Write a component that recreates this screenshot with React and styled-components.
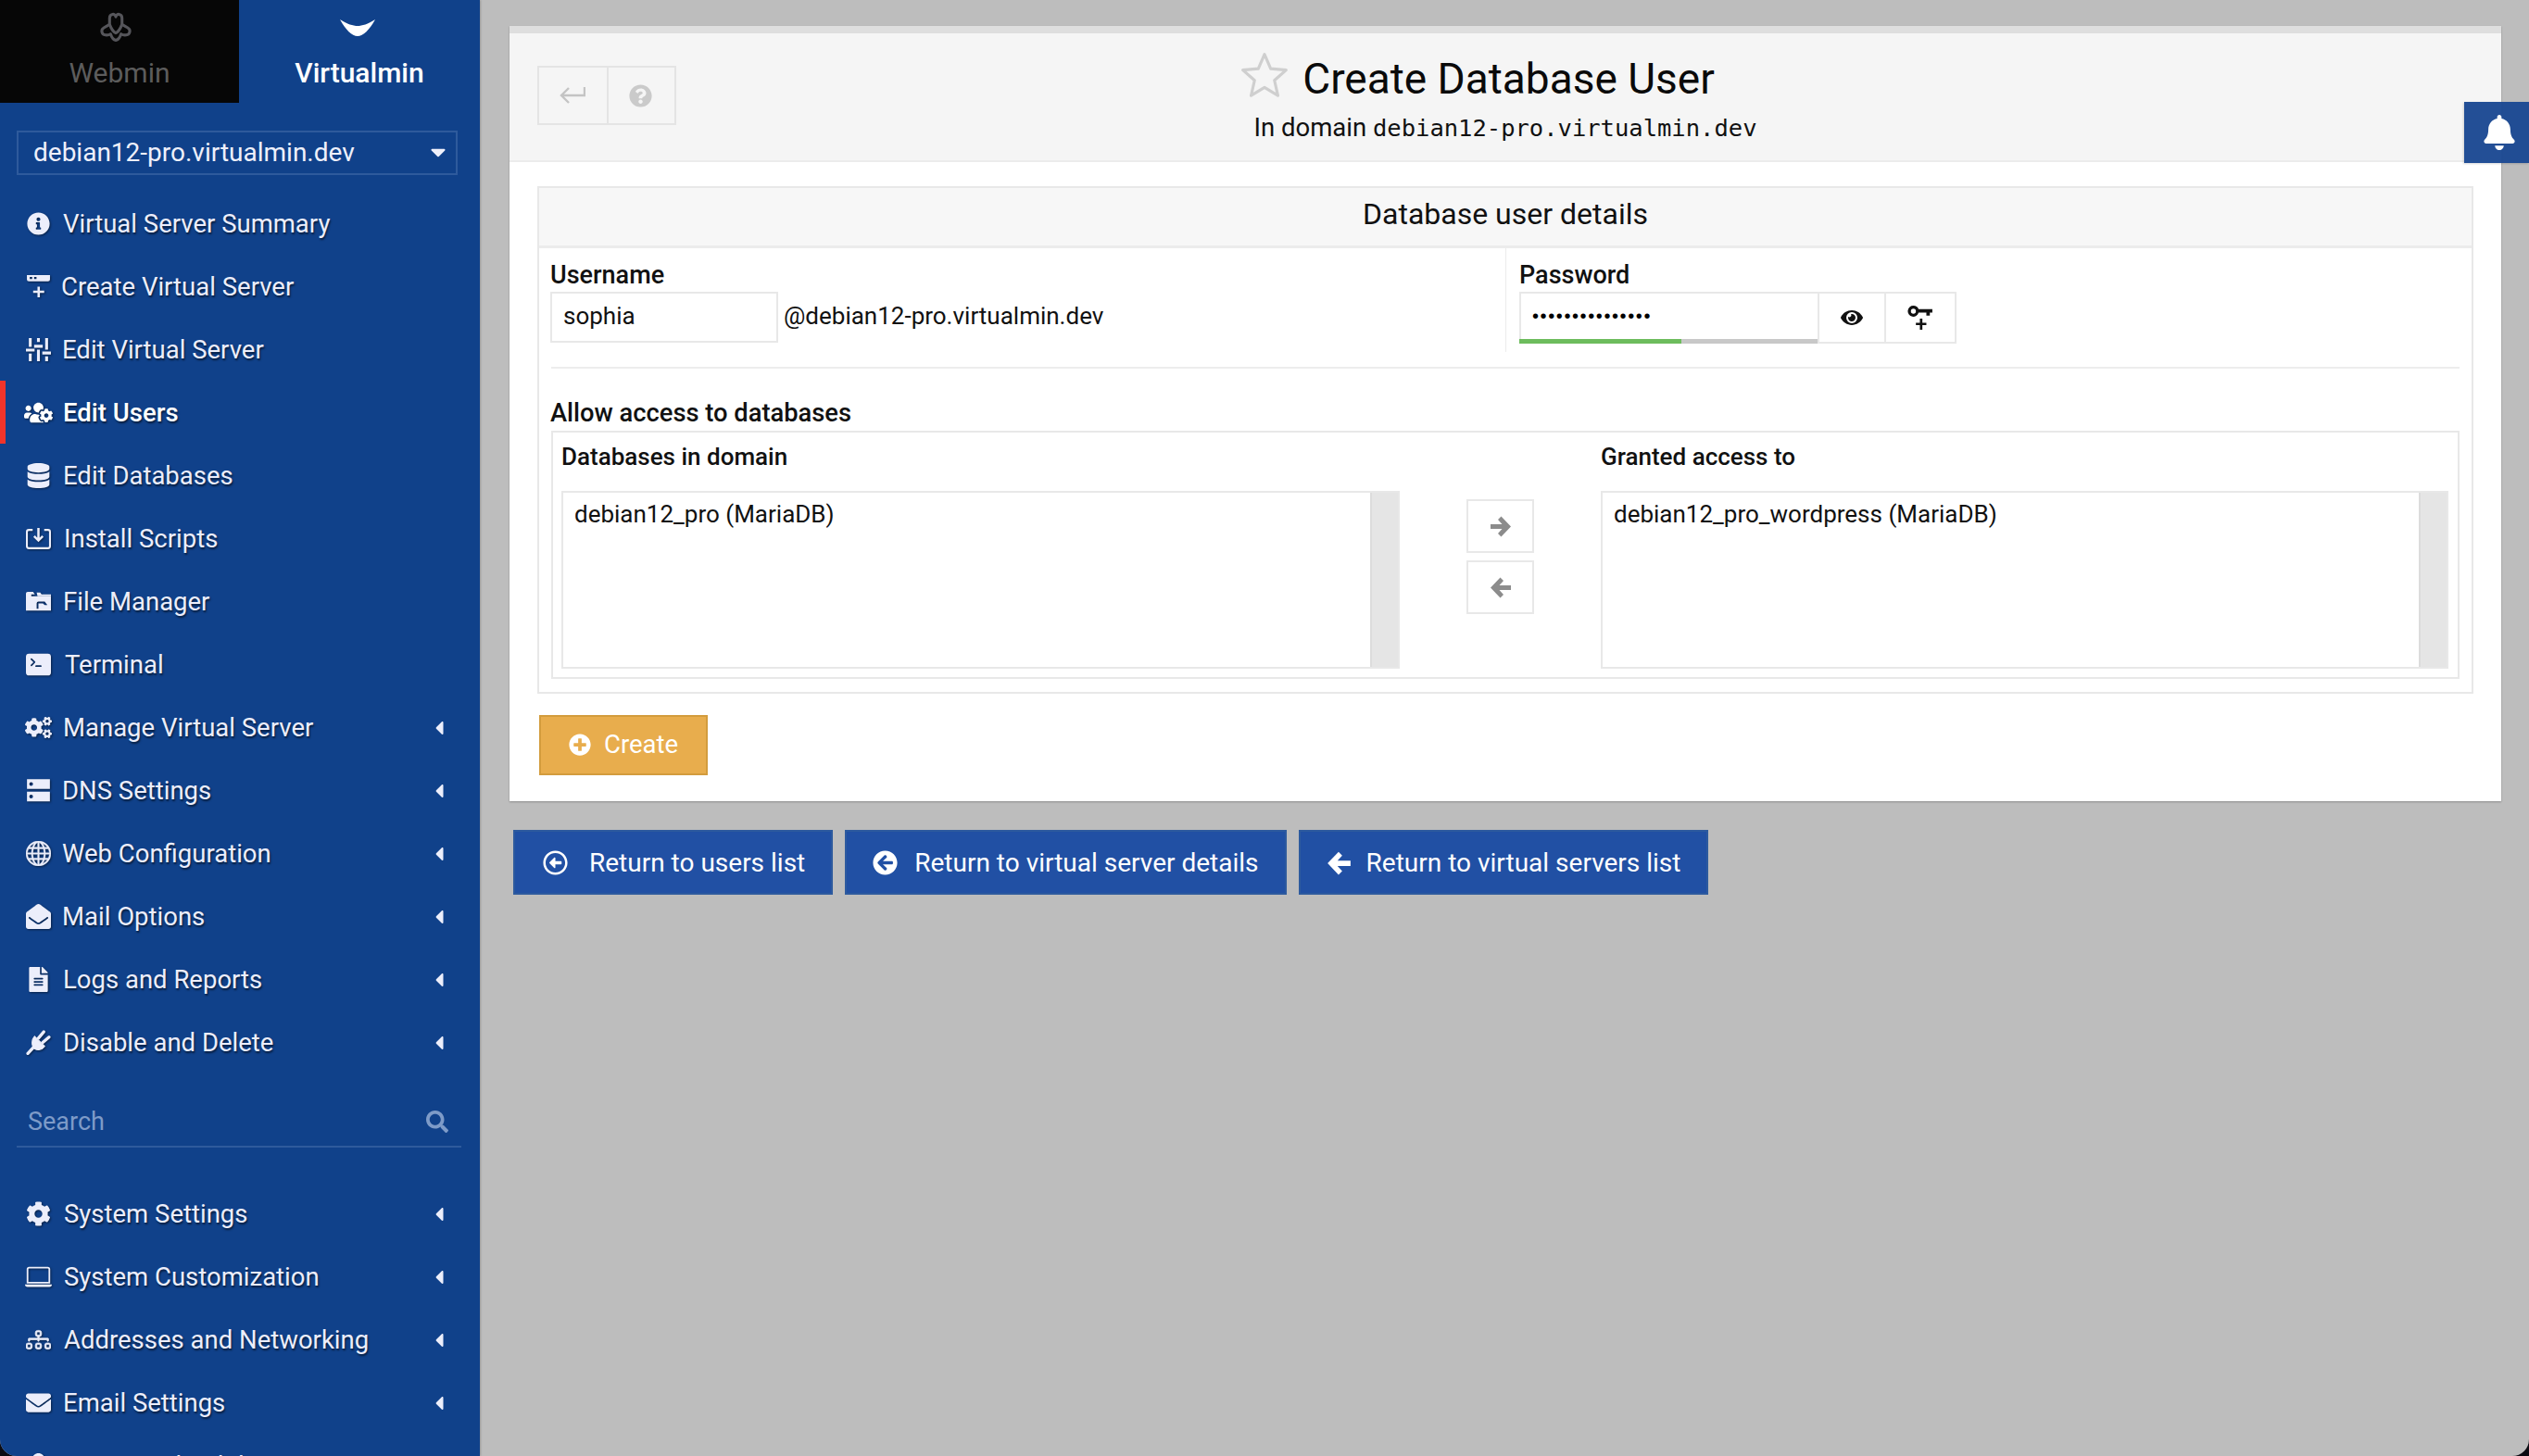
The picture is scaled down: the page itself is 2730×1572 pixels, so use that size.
import React from 'react';
import styled, { createGlobalStyle } from 'styled-components';
import {
  FaInfoCircle, FaUsersCog, FaDatabase, FaCogs, FaEnvelopeOpen, FaFileAlt, FaCog, FaEnvelope,
  FaCaretLeft, FaCaretDown, FaSearch, FaBell, FaQuestionCircle, FaEye,
  FaPlusCircle, FaRegArrowAltCircleLeft, FaArrowCircleLeft, FaUser,
} from 'react-icons/fa';
import { BsTerminalFill, BsGlobe, BsLaptop, BsDiagram3 } from 'react-icons/bs';

const GlobalStyle = createGlobalStyle`
  html, body {
    margin: 0;
    padding: 0;
    background: #0b0b12;
  }
  * {
    box-sizing: border-box;
  }
`;

const CreateServerIcon = () => (
  <svg viewBox="0 0 26 26" fill="currentColor">
    <path fillRule="evenodd" d="M1 1h24v4.500a2 2 0 0 1-2 2H3a2 2 0 0 1-2-2zM4 3v2h2.500V3zm4.500 0v2H11V3z" />
    <path d="M12 13h2.500v4H19v2.500h-4.500V24H12v-4.500H7.500V17H12z" />
  </svg>
);

const SlidersIcon = () => (
  <svg viewBox="0 0 26 26" fill="currentColor">
    <path d="M3 1h3v9H3zM0 12h9v3H0zM3 17h3v8H3zM11.500 1h3v4h-3zM8.500 8h9v3h-9zM11.500 13h3v12h-3zM20 1h3v12h-3zM17 15h9v3h-9zM20 20h3v5h-3z" />
  </svg>
);

const InstallIcon = () => (
  <svg viewBox="0 0 26 24" fill="none" stroke="currentColor" strokeWidth="2">
    <path d="M7 3H3a2 2 0 0 0-2 2v15a2 2 0 0 0 2 2h20a2 2 0 0 0 2-2V5a2 2 0 0 0-2-2h-4" />
    <path d="M13 1v12M8.500 9.500 13 14l4.500-4.500" strokeWidth="2.400" />
  </svg>
);

const FoldersIcon = () => (
  <svg viewBox="0 0 28 24" fill="currentColor">
    <path fillRule="evenodd" d="M0 3a2 2 0 0 1 2-2h6l2 3h-4v2h22v16H0zM14 12a2 2 0 0 0-2 2v6h2v-6h5l2 2h3l-3-4z" />
    <path d="M12 2h4l1.500 2H28v2H13z" />
  </svg>
);

const ServerIcon = () => (
  <svg viewBox="0 0 24 24" fill="currentColor">
    <path fillRule="evenodd" d="M1 1h22v9.500H1zM5 4a1.800 1.800 0 1 0 0 3.600A1.800 1.800 0 0 0 5 4zM1 13h22v9.500H1zM5 16a1.800 1.800 0 1 0 0 3.600A1.800 1.800 0 0 0 5 16z" />
  </svg>
);

const PlugIcon = () => (
  <svg viewBox="0 0 26 26" fill="currentColor" stroke="currentColor">
    <path d="M9 6.500 19.500 17c-3 4-7.500 4.500-10.500 2.500C5.500 16.500 5.500 10 9 6.500z" strokeWidth="1" />
    <path d="M13 8.500 18.500 2M17.500 13 24 7.500" strokeWidth="3.200" strokeLinecap="round" fill="none" />
    <path d="M8 18 2 24.500" strokeWidth="3.200" strokeLinecap="round" fill="none" />
  </svg>
);

const WebminLogo = () => (
  <svg viewBox="0 0 34 32" width="36" height="33" fill="none" stroke="#55555a" strokeWidth="3" strokeLinejoin="round">
    <path d="M10.500 13V6.500c0-5 6-5.500 6.500-1.500.5-4 6.500-3.500 6.500 1.500V13l6 3.500c3.500 2 2.500 7-1.500 7.500-2.500.3-4 0-5.500-1-1 3-3 6-5.500 6.500-2.500-.5-4.500-3.500-5.500-6.500-1.500 1-3 1.300-5.500 1-4-.5-5-5.500-1.500-7.500z" />
    <path d="M10.500 13c2 5 4 8 6.500 9 2.500-1 4.500-4 6.500-9" />
  </svg>
);

const VirtualminLogo = () => (
  <svg viewBox="0 0 38 18" width="38" height="18" fill="#fff">
    <path d="M0 0c8 5 14 7 19 7s11-2 19-7c-6 11-13 18-19 18S6 11 0 0z" />
  </svg>
);

const BackIcon = () => (
  <svg viewBox="0 0 28 22" width="28" height="22" fill="none" stroke="#c4c4c4" strokeWidth="2.400">
    <path d="M27 2v9H3M10 3 2 11l8 8" />
  </svg>
);

const KeyPlusIcon = () => (
  <svg viewBox="0 0 26 26" fill="#111">
    <path fillRule="evenodd" d="M6 1a5.500 5.500 0 0 1 5.200 3.500H25v3.500h-2.500v3h-3.500V8h-7.800A5.500 5.500 0 1 1 6 1zm0 3a2.500 2.500 0 1 0 0 5 2.500 2.500 0 0 0 0-5z" />
    <path d="M12.500 14h2.500v4h4v2.500h-4v4.500h-2.500v-4.500h-4V18h4z" />
  </svg>
);

const StarIcon = () => (
  <svg viewBox="0 0 54 52" width="50" height="50" fill="none" stroke="#cfcfcf" strokeWidth="3.400" strokeLinejoin="round">
    <path d="M27 3l7.200 16.600 18 1.700-13.600 12 4 17.700L27 41.600 11.400 51l4-17.700-13.600-12 18-1.700z" />
  </svg>
);

const ThickArrowLeft = () => (
  <svg viewBox="0 0 24 24" fill="currentColor">
    <path d="M11.500 1.500 15 5l-4.500 5H23v5H10.500l4.500 5-3.500 3.500L1 12.500z" />
  </svg>
);

const ThickArrowRight = () => (
  <svg viewBox="0 0 24 24" fill="currentColor">
    <path d="M12.500 1.500 9 5l4.500 5H1v5h12.500L9 20l3.500 3.500L23 12.500z" />
  </svg>
);

const BoldDiagram = styled(BsDiagram3)`
  stroke: currentColor;
  stroke-width: 0.4px;
`;

const BoldGlobe = styled(BsGlobe)`
  stroke: currentColor;
  stroke-width: 0.25px;
`;

const mainItems = [
  { label: 'Virtual Server Summary', icon: <FaInfoCircle />, indent: 68, size: 25 },
  { label: 'Create Virtual Server', icon: <CreateServerIcon />, indent: 66 },
  { label: 'Edit Virtual Server', icon: <SlidersIcon />, indent: 67 },
  { label: 'Edit Users', icon: <FaUsersCog />, indent: 68, active: true, size: 31 },
  { label: 'Edit Databases', icon: <FaDatabase />, indent: 68 },
  { label: 'Install Scripts', icon: <InstallIcon />, indent: 69 },
  { label: 'File Manager', icon: <FoldersIcon />, indent: 68 },
  { label: 'Terminal', icon: <BsTerminalFill />, indent: 70 },
  { label: 'Manage Virtual Server', icon: <FaCogs />, indent: 68, sub: true, size: 29 },
  { label: 'DNS Settings', icon: <ServerIcon />, indent: 67, sub: true },
  { label: 'Web Configuration', icon: <BoldGlobe />, indent: 67, sub: true },
  { label: 'Mail Options', icon: <FaEnvelopeOpen />, indent: 67, sub: true },
  { label: 'Logs and Reports', icon: <FaFileAlt />, indent: 68, sub: true },
  { label: 'Disable and Delete', icon: <PlugIcon />, indent: 68, sub: true },
];

const systemItems = [
  { label: 'System Settings', icon: <FaCog />, indent: 69, sub: true },
  { label: 'System Customization', icon: <BsLaptop />, indent: 69, sub: true, size: 29 },
  { label: 'Addresses and Networking', icon: <BoldDiagram />, indent: 69, sub: true },
  { label: 'Email Settings', icon: <FaEnvelope />, indent: 68, sub: true },
  { label: 'Limits and Validation', icon: <FaUser />, indent: 68, sub: true },
];

const MenuList = ({ items, top }) => (
  <Menu $top={top}>
    {items.map((item) => (
      <MenuRow key={item.label} $active={item.active} $indent={item.indent}>
        <MenuIcon $size={item.size}>{item.icon}</MenuIcon>
        <span>{item.label}</span>
        {item.sub && <MenuCaret><FaCaretLeft /></MenuCaret>}
      </MenuRow>
    ))}
  </Menu>
);

const App = () => (
  <Page>
    <GlobalStyle />
    <Sidebar>
      <Tabs>
        <Tab>
          <WebminLogo />
          <TabLabel>Webmin</TabLabel>
        </Tab>
        <Tab $active>
          <VirtualminLogo />
          <TabLabel>Virtualmin</TabLabel>
        </Tab>
      </Tabs>
      <DomainSelect>
        debian12-pro.virtualmin.dev
        <FaCaretDown />
      </DomainSelect>
      <MenuList items={mainItems} top={18} />
      <SearchBox>
        Search
        <FaSearch />
      </SearchBox>
      <MenuList items={systemItems} top={37} />
    </Sidebar>

    <Main>
      <Panel>
        <PanelHeader>
          <ButtonGroup>
            <GroupButton><BackIcon /></GroupButton>
            <GroupButton><FaQuestionCircle /></GroupButton>
          </ButtonGroup>
          <Heading>
            <Title>
              <StarSlot><StarIcon /></StarSlot>
              Create Database User
            </Title>
            <Subtitle>In domain <Mono>debian12-pro.virtualmin.dev</Mono></Subtitle>
          </Heading>
        </PanelHeader>

        <PanelBody>
          <FormBox>
            <FormTitle>Database user details</FormTitle>
            <FieldRow>
              <Field>
                <Label>Username</Label>
                <InputLine>
                  <UserInput value="sophia" readOnly />
                  <Suffix>@debian12-pro.virtualmin.dev</Suffix>
                </InputLine>
              </Field>
              <Field $divided>
                <Label>Password</Label>
                <InputLine>
                  <PasswordWrap>
                    <PasswordInput type="password" value="sophiasecret123" readOnly />
                    <Strength><StrengthFill style={{ width: `${(175 / 322) * 100}%` }} /></Strength>
                  </PasswordWrap>
                  <IconButton $size={24}><FaEye /></IconButton>
                  <IconButton $size={28} $wide><KeyPlusIcon /></IconButton>
                </InputLine>
              </Field>
            </FieldRow>
            <AccessSection>
              <AccessLabel>Allow access to databases</AccessLabel>
              <AccessBox>
                <ListColumn>
                  <ListLabel>Databases in domain</ListLabel>
                  <ListBox>
                    <ListItems>debian12_pro (MariaDB)</ListItems>
                    <Scrollbar />
                  </ListBox>
                </ListColumn>
                <MoveButtons>
                  <MoveButton><ThickArrowRight /></MoveButton>
                  <MoveButton><ThickArrowLeft /></MoveButton>
                </MoveButtons>
                <ListColumn>
                  <ListLabel>Granted access to</ListLabel>
                  <ListBox>
                    <ListItems>debian12_pro_wordpress (MariaDB)</ListItems>
                    <Scrollbar />
                  </ListBox>
                </ListColumn>
              </AccessBox>
            </AccessSection>
          </FormBox>
          <CreateButton><FaPlusCircle />Create</CreateButton>
        </PanelBody>
      </Panel>

      <ReturnBar>
        <ReturnButton $pad={30} $gap={23}><FaRegArrowAltCircleLeft />Return to users list</ReturnButton>
        <ReturnButton $pad={28} $gap={18}><FaArrowCircleLeft />Return to virtual server details</ReturnButton>
        <ReturnButton $pad={28} $gap={16}><ThickArrowLeft />Return to virtual servers list</ReturnButton>
      </ReturnBar>
    </Main>

    <BellTab><FaBell /></BellTab>
  </Page>
);

const Page = styled.div`
  position: relative;
  display: flex;
  width: 2730px;
  height: 1572px;
  overflow: hidden;
  background: #bdbdbd;
  border-radius: 0 0 18px 18px;
  font-family: Roboto, "Liberation Sans", sans-serif;
  font-size: 26px;
  color: #111;
`;

const Sidebar = styled.aside`
  flex: 0 0 518px;
  background: #10418a;
  box-shadow: 1px 0 2px rgba(0, 0, 0, 0.2);
`;

const Tabs = styled.div`
  display: flex;
  height: 111px;
`;

const Tab = styled.div`
  flex: ${(p) => (p.$active ? '0 0 260px' : '0 0 258px')};
  display: flex;
  flex-direction: column;
  align-items: center;
  padding-top: ${(p) => (p.$active ? '21px' : '13px')};
  background: ${(p) => (p.$active ? 'transparent' : '#060606')};
  color: ${(p) => (p.$active ? '#fff' : '#5c5c5c')};
  font-weight: ${(p) => (p.$active ? 500 : 400)};

  > svg {
    margin-right: ${(p) => (p.$active ? '5px' : '9px')};
  }
`;

const TabLabel = styled.div`
  margin-top: auto;
  padding-bottom: 14px;
  font-size: 30px;
  line-height: 36px;
`;

const DomainSelect = styled.div`
  display: flex;
  align-items: center;
  justify-content: space-between;
  height: 48px;
  margin: 30px 24px 0 18px;
  padding: 0 6px 2px 16px;
  border: 2px solid #2e5a9c;
  color: #eef0fb;
  font-size: 28px;

  svg {
    width: 26px;
    height: 26px;
  }
`;

const Menu = styled.nav`
  display: flex;
  flex-direction: column;
  margin-top: ${(p) => p.$top}px;
`;

const MenuRow = styled.div`
  position: relative;
  display: flex;
  align-items: center;
  height: 68px;
  padding-left: ${(p) => p.$indent}px;
  color: ${(p) => (p.$active ? '#fff' : '#eceefb')};
  font-size: 27.500px;
  font-weight: ${(p) => (p.$active ? 500 : 400)};
  text-shadow: 1px 2px 2px rgba(0, 0, 0, 0.55);

  &::before {
    content: ${(p) => (p.$active ? "''" : 'none')};
    position: absolute;
    left: 0;
    top: 0;
    bottom: 0;
    width: 6px;
    background: #f0342a;
  }
`;

const MenuIcon = styled.span`
  position: absolute;
  left: 26px;
  top: 50%;
  display: flex;
  align-items: center;
  justify-content: center;
  width: 30px;
  height: 30px;
  transform: translateY(-50%);
  filter: drop-shadow(1px 1px 1px rgba(0, 0, 0, 0.5));

  svg {
    flex: none;
    width: ${(p) => p.$size || 27}px;
    height: ${(p) => p.$size || 27}px;
  }
`;

const MenuCaret = styled.span`
  position: absolute;
  right: 36px;
  top: 51%;
  display: flex;
  transform: translateY(-50%);

  svg {
    width: 16px;
    height: 24px;
  }
`;

const SearchBox = styled.div`
  display: flex;
  align-items: center;
  justify-content: space-between;
  height: 54px;
  margin: 26px 20px 0 18px;
  padding: 0 14px 0 12px;
  border-bottom: 2px solid #2e5a9c;
  color: #7e9bc8;
  font-size: 27px;

  svg {
    width: 24px;
    height: 24px;
  }
`;

const Main = styled.main`
  flex: 1;
  display: flex;
  flex-direction: column;
  padding: 28px 30px 0 32px;
`;

const Panel = styled.section`
  background: #fff;
  border-top: 8px solid #dedede;
  box-shadow: 0 1px 2px rgba(0, 0, 0, 0.25);
`;

const PanelHeader = styled.header`
  position: relative;
  display: flex;
  justify-content: center;
  height: 139px;
  background: #f5f5f5;
  border-bottom: 2px solid #ececec;
`;

const ButtonGroup = styled.div`
  position: absolute;
  left: 30px;
  top: 35px;
  display: flex;
  height: 64px;
  border: 2px solid #e4e4e4;
`;

const GroupButton = styled.div`
  display: flex;
  align-items: center;
  justify-content: center;
  width: 73px;

  & + & {
    border-left: 2px solid #e4e4e4;
  }

  svg {
    color: #cacaca;
    margin-right: 2px;
  }

  & + & svg {
    width: 25px;
    height: 25px;
  }
`;

const Heading = styled.div`
  display: flex;
  flex-direction: column;
  align-items: center;
  padding-top: 23px;
`;

const Title = styled.h1`
  position: relative;
  margin: 0 0 0 7px;
  font-size: 46px;
  font-weight: 400;
  line-height: 52px;
  color: #0a0a0a;
`;

const StarSlot = styled.span`
  position: absolute;
  right: 100%;
  top: -4px;
  margin-right: 16px;
`;

const Subtitle = styled.div`
  margin-top: 10px;
  font-size: 27.500px;
  line-height: 34px;
`;

const Mono = styled.span`
  font-family: "DejaVu Sans Mono", monospace;
  font-size: 25.500px;
`;

const PanelBody = styled.div`
  padding: 26px 30px 28px;
`;

const FormBox = styled.div`
  border: 2px solid #e8e8e8;
  padding-bottom: 14px;
`;

const FormTitle = styled.div`
  height: 65px;
  padding-bottom: 2px;
  background: #f7f7f7;
  border-bottom: 3px solid #ececec;
  font-size: 32px;
  line-height: 56px;
  text-align: center;
`;

const FieldRow = styled.div`
  display: grid;
  grid-template-columns: 1043px 1fr;
  align-items: start;
  height: 128px;
`;

const Field = styled.div`
  height: 112px;
  padding: 14px 0 0 ${(p) => (p.$divided ? '14px' : '12px')};
  border-left: ${(p) => (p.$divided ? '1px solid #ececec' : '0')};
`;

const Label = styled.div`
  height: 33px;
  font-size: 27px;
  font-weight: 500;
  line-height: 30px;
`;

const InputLine = styled.div`
  display: flex;
  align-items: center;
`;

const UserInput = styled.input`
  width: 246px;
  height: 55px;
  padding: 0 12px 3px;
  border: 2px solid #e8e8e8;
  outline: none;
  font: inherit;
  color: #111;
`;

const Suffix = styled.span`
  margin: -3px 0 0 6px;
`;

const PasswordWrap = styled.div`
  position: relative;
  width: 322px;
  height: 56px;
  border: 2px solid #e8e8e8;
  border-right: 0;
`;

const PasswordInput = styled.input`
  width: 100%;
  height: 48px;
  padding: 0 12px;
  border: 0;
  outline: none;
  font-size: 20px;
  font-family: "Liberation Sans", sans-serif;
  letter-spacing: 1.600px;
`;

const Strength = styled.div`
  position: absolute;
  left: -2px;
  right: 0;
  bottom: -2px;
  height: 5px;
  background: #c8c8c8;
`;

const StrengthFill = styled.div`
  height: 100%;
  background: #6dbc5d;
`;

const IconButton = styled.div`
  display: flex;
  align-items: center;
  justify-content: center;
  width: ${(p) => (p.$wide ? '76px' : '74px')};
  height: 56px;
  border: 2px solid #e8e8e8;

  & + & {
    border-left: 0;
  }

  > svg {
    width: ${(p) => p.$size}px;
    height: ${(p) => p.$size}px;
  }
`;

const AccessSection = styled.div`
  margin: 0 13px;
  border-top: 2px solid #ededed;
`;

const AccessLabel = styled.div`
  margin: 30px 0 0 -1px;
  height: 37px;
  font-size: 27.300px;
  font-weight: 500;
  line-height: 36px;
`;

const AccessBox = styled.div`
  display: grid;
  grid-template-columns: 905px 217px 915px;
  height: 268px;
  padding: 0 10px 0 9px;
  border: 2px solid #e8e8e8;
`;

const ListColumn = styled.div`
  display: flex;
  flex-direction: column;
`;

const ListLabel = styled.div`
  height: 63px;
  padding-top: 10px;
  font-weight: 500;
  line-height: 32px;
`;

const ListBox = styled.div`
  display: flex;
  height: 192px;
  border: 2px solid #e8e8e8;
`;

const ListItems = styled.div`
  flex: 1;
  padding: 6px 12px;
  line-height: 34px;
`;

const Scrollbar = styled.div`
  flex: 0 0 30px;
  background: #e5e5e5;
  border-left: 2px solid #dcdcdc;
`;

const MoveButtons = styled.div`
  display: flex;
  flex-direction: column;
  align-items: center;
  gap: 8px;
  padding-top: 72px;
`;

const MoveButton = styled.div`
  display: flex;
  align-items: center;
  justify-content: center;
  width: 73px;
  height: 58px;
  border: 2px solid #e8e8e8;
  color: #8c8c8c;

  svg {
    width: 24px;
    height: 24px;
  }
`;

const CreateButton = styled.div`
  display: inline-flex;
  align-items: center;
  gap: 14px;
  height: 65px;
  margin: 23px 0 0 2px;
  padding: 0 30px 2px;
  background: #e8ad4d;
  border: 2px solid #d39c3d;
  color: #fff;
  font-size: 27.500px;

  svg {
    width: 24px;
    height: 24px;
  }
`;

const ReturnBar = styled.div`
  display: flex;
  gap: 13px;
  margin: 31px 0 0 4px;
`;

const ReturnButton = styled.div`
  display: flex;
  align-items: center;
  gap: ${(p) => p.$gap}px;
  height: 70px;
  padding: 0 28px 0 ${(p) => p.$pad}px;
  background: #2150a4;
  border: 2px solid #2d5a9e;
  color: #fff;
  font-size: 28px;

  svg {
    width: 27px;
    height: 27px;
  }
`;

const BellTab = styled.div`
  position: absolute;
  right: 0;
  top: 110px;
  display: flex;
  align-items: center;
  justify-content: center;
  width: 70px;
  height: 66px;
  padding-left: 5px;
  background: rgba(26, 72, 146, 0.96);
  box-shadow: -1px 1px 2px rgba(0, 0, 0, 0.15);
  color: #fff;

  svg {
    width: 38px;
    height: 38px;
  }
`;

export default App;
